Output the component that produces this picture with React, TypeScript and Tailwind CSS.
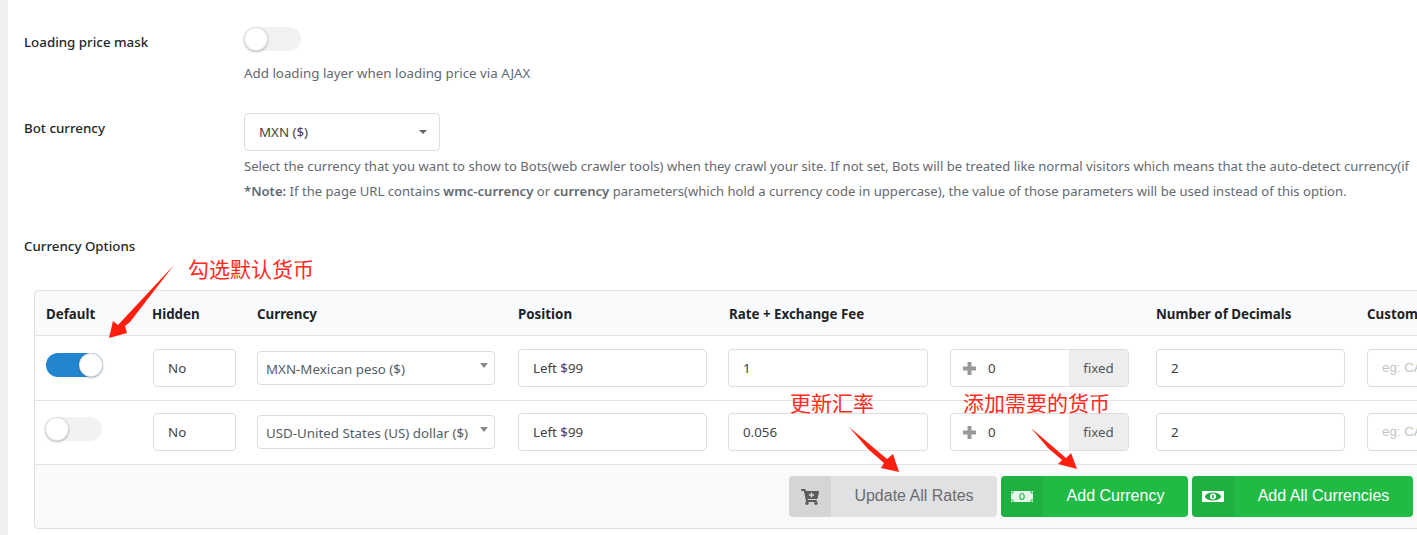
import { FaCartPlus } from "react-icons/fa";

const ROW_GRID =
  "grid grid-cols-[106px_105px_261px_211px_221px_206px_211px_200px] items-center pl-[11px]";

const RATES = [
  { on: true, currency: "MXN-Mexican peso ($)", rate: "1", rowClass: "h-[65px]" },
  { on: false, currency: "USD-United States (US) dollar ($)", rate: "0.056", rowClass: "h-[64px] pb-px" },
];

function Toggle({ on = false }: { on?: boolean }) {
  return (
    <div
      className={`flex h-6 w-[57px] items-center rounded-full ${
        on ? "justify-end bg-[#2185d0]" : "bg-[#f2f2f2]"
      }`}
    >
      <span className="size-6 rounded-full bg-white shadow-[0_1px_2px_rgba(34,36,38,0.3),inset_0_0_0_1px_rgba(34,36,38,0.15)]" />
    </div>
  );
}

function Box({ children, className = "" }: { children: React.ReactNode; className?: string }) {
  return (
    <div
      className={`flex h-[38px] items-center rounded-[4px] border border-[#dededf] bg-white px-[14px] text-[#444] ${className}`}
    >
      {children}
    </div>
  );
}

function Row({
  on,
  currency,
  rate,
  rowClass,
}: {
  on: boolean;
  currency: string;
  rate: string;
  rowClass: string;
}) {
  return (
    <div className={`${ROW_GRID} ${rowClass} border-b border-[#e2e3e4] bg-white`}>
      <div className={`mb-[6px] ${on ? "" : "-ml-px"}`}>
        <Toggle on={on} />
      </div>
      <Box className="ml-px w-[83px]">No</Box>
      <div className="relative flex h-[34px] w-[238px] items-center rounded-[4px] border border-[#dededf] px-2 pt-[2px] text-[#555e66]">
        {currency}
        <span className="absolute top-[11px] right-[6px] size-0 border-x-4 border-t-[5px] border-x-transparent border-t-[#888]" />
      </div>
      <Box className="w-[189px]">Left $99</Box>
      <Box className="-ml-px w-[200px]">{rate}</Box>
      <div className="flex h-[38px] w-[179px] items-center overflow-hidden rounded-[4px] border border-[#dededf] text-[#444]">
        <svg className="ml-3 size-[13px] text-[#999]" viewBox="0 0 13 13" fill="currentColor">
          <path d="M4.5 0h4v4.5H13v4H8.5V13h-4V8.5H0v-4h4.5z" />
        </svg>
        <span className="ml-3 flex-1">0</span>
        <span className="flex h-full w-[59px] items-center justify-center bg-[#ededed] text-[#555]">fixed</span>
      </div>
      <Box className="w-[189px]">2</Box>
      <Box className="w-[150px] font-['Liberation_Sans',sans-serif] text-[#c4c4c4]">eg: CAD</Box>
    </div>
  );
}

function BillOutline() {
  return (
    <svg width="22" height="11" viewBox="0 0 22 11">
      <rect width="22" height="11" fill="#e6f7ea" />
      <path d="M1 3V1h2M19 1h2v2M21 8v2h-2M3 10H1V8" fill="none" stroke="#21ba45" />
      <ellipse cx="11" cy="5.5" rx="2.2" ry="3" fill="none" stroke="#21ba45" strokeWidth="1.2" />
    </svg>
  );
}

function BillSolid() {
  return (
    <svg width="22" height="11" viewBox="0 0 22 11">
      <rect width="22" height="11" fill="#fff" />
      <ellipse cx="11" cy="5.5" rx="8" ry="4" fill="#1ea83e" />
      <circle cx="11" cy="5.5" r="3" fill="#fff" />
      <rect x="10.2" y="3.8" width="1.6" height="3.4" fill="#1ea83e" />
    </svg>
  );
}

function ActionButton({
  icon,
  label,
  green = false,
  className,
}: {
  icon: React.ReactNode;
  label: string;
  green?: boolean;
  className: string;
}) {
  return (
    <button
      className={`flex h-[41px] items-stretch overflow-hidden rounded-[4px] font-['Liberation_Sans',sans-serif] text-[16px] ${
        green ? "bg-[#21ba45] text-white" : "bg-[#e0e1e2] text-[#6b6c70]"
      } ${className}`}
    >
      <span className="flex w-[42px] shrink-0 items-center justify-center bg-black/5">{icon}</span>
      <span className="flex flex-1 items-center justify-center pb-[2px]">{label}</span>
    </button>
  );
}

export default function App() {
  return (
    <div className="relative h-[535px] w-[1417px] overflow-hidden bg-white font-['Noto_Sans','Noto_Sans_CJK_SC',sans-serif] text-[13.33px] leading-5 text-[#646970]">
      <div className="h-full border-l-[8px] border-[#f0f0f1] pt-[27px] pl-4">
        <div className="flex">
          <div className="w-[220px] pt-[5px] font-medium text-[#23282d]">Loading price mask</div>
          <div>
            <Toggle />
            <p className="mt-3">Add loading layer when loading price via AJAX</p>
          </div>
        </div>

        <div className="mt-[30px] flex">
          <div className="w-[220px] pt-[5px] font-medium text-[#23282d]">Bot currency</div>
          <div className="min-w-0 flex-1 whitespace-nowrap">
            <div className="flex h-[38px] w-[196px] items-center justify-between rounded-[4px] border border-[#dededf] pr-3 pl-[14px] text-[#444]">
              MXN ($)
              <span className="size-0 border-x-[4px] border-t-[4px] border-x-transparent border-t-[#666]" />
            </div>
            <p className="mt-[5px] text-[13.1px]">
              Select the currency that you want to show to Bots(web crawler tools) when they crawl your site. If not set, Bots will be treated like normal visitors which means that the auto-detect currency(if
            </p>
            <p className="mt-[5px] text-[13.1px]">
              <b className="font-semibold">*Note:</b> If the page URL contains <b className="font-semibold">wmc-currency</b> or{" "}
              <b className="font-semibold">currency</b> parameters(which hold a currency code in uppercase), the value of those parameters will be used instead of this option.
            </p>
          </div>
        </div>

        <div className="mt-[35px] font-medium text-[#23282d]">Currency Options</div>

        <div className="mt-[34px] ml-[10px] w-[1500px] rounded-[4px] border border-[#dfe0e1] bg-[#f9fafb]">
          <div className={`${ROW_GRID} h-[45px] border-b border-[#e2e3e4] pt-[2px] font-bold text-[#1d2327]`}>
            <span>Default</span>
            <span>Hidden</span>
            <span>Currency</span>
            <span>Position</span>
            <span>Rate + Exchange Fee</span>
            <span />
            <span>Number of Decimals</span>
            <span>Custom symbol</span>
          </div>
          {RATES.map((r) => (
            <Row key={r.currency} {...r} />
          ))}
          <div className="flex h-[63px] pt-[11px] pl-[754px]">
            <ActionButton
              className="w-[208px]"
              icon={<FaCartPlus className="size-[18px] text-[#5c5c5e]" />}
              label="Update All Rates"
            />
            <ActionButton green className="ml-1 w-[187px]" icon={<BillOutline />} label="Add Currency" />
            <ActionButton green className="ml-1 w-[221px]" icon={<BillSolid />} label="Add All Currencies" />
          </div>
        </div>
      </div>

      {/* annotations drawn over the screenshot */}
      <span className="absolute top-[254px] left-[188px] text-[21px] leading-[30px] text-[#ff2a20]">勾选默认货币</span>
      <span className="absolute top-[388px] left-[790px] text-[21px] leading-[30px] text-[#ff2a20]">更新汇率</span>
      <span className="absolute top-[388px] left-[963px] text-[21px] leading-[30px] text-[#ff2a20]">添加需要的货币</span>
      <svg className="absolute top-0 left-0" width="1417" height="535" fill="#ff1f0f">
        <polygon points="174,265 130,322 125,326 127,333 109,338 113,321 118,325" />
        <polygon points="849,427 887,459 893,454 899,472 881,468 884,463 868,449" />
        <polygon points="1031,428 1066,458 1071,453 1077,469 1058,464 1062,460 1048,448" />
      </svg>
    </div>
  );
}
